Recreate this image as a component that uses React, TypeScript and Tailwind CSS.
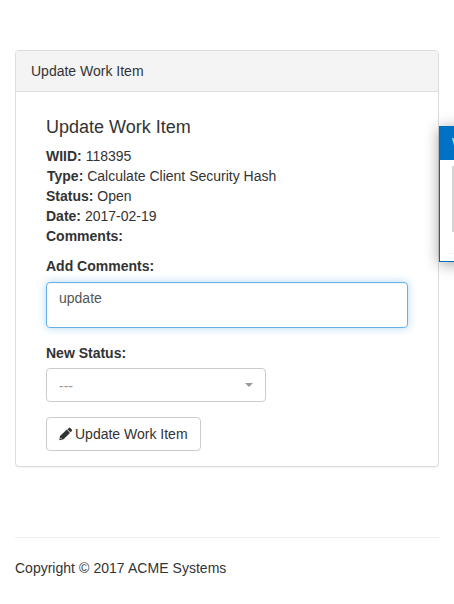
import React from "react";

const details = [
  { label: "WIID:", value: "118395", indent: "" },
  { label: "Type:", value: "Calculate Client Security Hash", indent: "pl-px" },
  { label: "Status:", value: "Open", indent: "" },
  { label: "Date:", value: "2017-02-19", indent: "" },
  { label: "Comments:", value: "", indent: "" },
];

function PencilIcon() {
  return (
    <svg width="14" height="14" viewBox="0 0 14 14" fill="currentColor" aria-hidden="true">
      <path d="M8.4 2.3 9.8.9a1 1 0 0 1 1.4 0l1.6 1.6a1 1 0 0 1 0 1.4L11.4 5.3z" />
      <path fillRule="evenodd" d="M7.9 2.6 11 5.9 4.5 12.3.3 13.3 1 9.0zM1.7 10.8l-.3 1.3 1.3-.3-.2-.8z" />
    </svg>
  );
}

function FloatingWindow() {
  return (
    <div className="absolute left-[439px] top-[126px] h-[136px] w-[200px] border border-[#006cb8] bg-white shadow-[0_2px_14px_rgba(0,0,0,0.36)]">
      <div className="h-[33px] bg-[#0072c6] pl-3 pt-[7px] text-xs leading-[18px] text-[#c9f0ff]">W</div>
      <div className="ml-3 mt-1.5 h-[66px] bg-[#d4d4d4]" />
      <div className="ml-2 mt-[21px] h-px bg-[#f5f5f5]" />
    </div>
  );
}

export default function App() {
  return (
    <div className="relative h-[604px] w-[454px] overflow-hidden bg-white font-['Liberation_Sans',Arial,sans-serif] text-sm leading-5 text-[#333]">
      <main className="px-[15px] pt-[50px]">
        <section className="h-[417px] rounded border border-[#ddd] bg-white shadow-[0_1px_1px_rgba(0,0,0,0.05)]">
          <header className="rounded-t-[3px] border-b border-[#ddd] bg-[#f4f4f4] px-[15px] py-2.5">Update Work Item</header>
          <form className="px-[30px] pt-[25px]" onSubmit={(e) => e.preventDefault()}>
            <h4 className="mb-[9px] text-lg leading-5">Update Work Item</h4>
            {details.map((d) => (
              <div key={d.label} className={d.indent}>
                <b>{d.label}</b> {d.value}
              </div>
            ))}
            <label htmlFor="comments" className="mb-[6px] mt-2.5 block font-bold">Add Comments:</label>
            <textarea
              id="comments"
              defaultValue="update"
              className="block h-[46px] w-full resize-none overflow-hidden rounded border border-[#66afe9] bg-white px-3 py-[5px] text-[#555] shadow-[inset_0_1px_1px_rgba(0,0,0,0.03),0_0_8px_rgba(102,175,233,0.5)] outline-none"
            />
            <div className="mb-[5px] mt-[15px] font-bold">New Status:</div>
            <button type="button" className="flex h-[34px] w-[220px] items-center justify-between rounded border border-[#ccc] px-3 text-[#999]">
              <span className="pt-0.5">---</span>
              <span className="h-0 w-0 border-x-4 border-t-4 border-x-transparent border-t-[#999]" />
            </button>
            <button type="submit" className="mt-[15px] flex h-[34px] w-[155px] items-center gap-0.5 whitespace-nowrap rounded border border-[#ccc] bg-white pl-3">
              <PencilIcon />
              <span>Update Work Item</span>
            </button>
          </form>
        </section>
        <footer className="mt-[70px] border-t border-[#eee] pt-5 [word-spacing:0.25px]">Copyright © 2017 ACME Systems</footer>
      </main>
      <FloatingWindow />
    </div>
  );
}
